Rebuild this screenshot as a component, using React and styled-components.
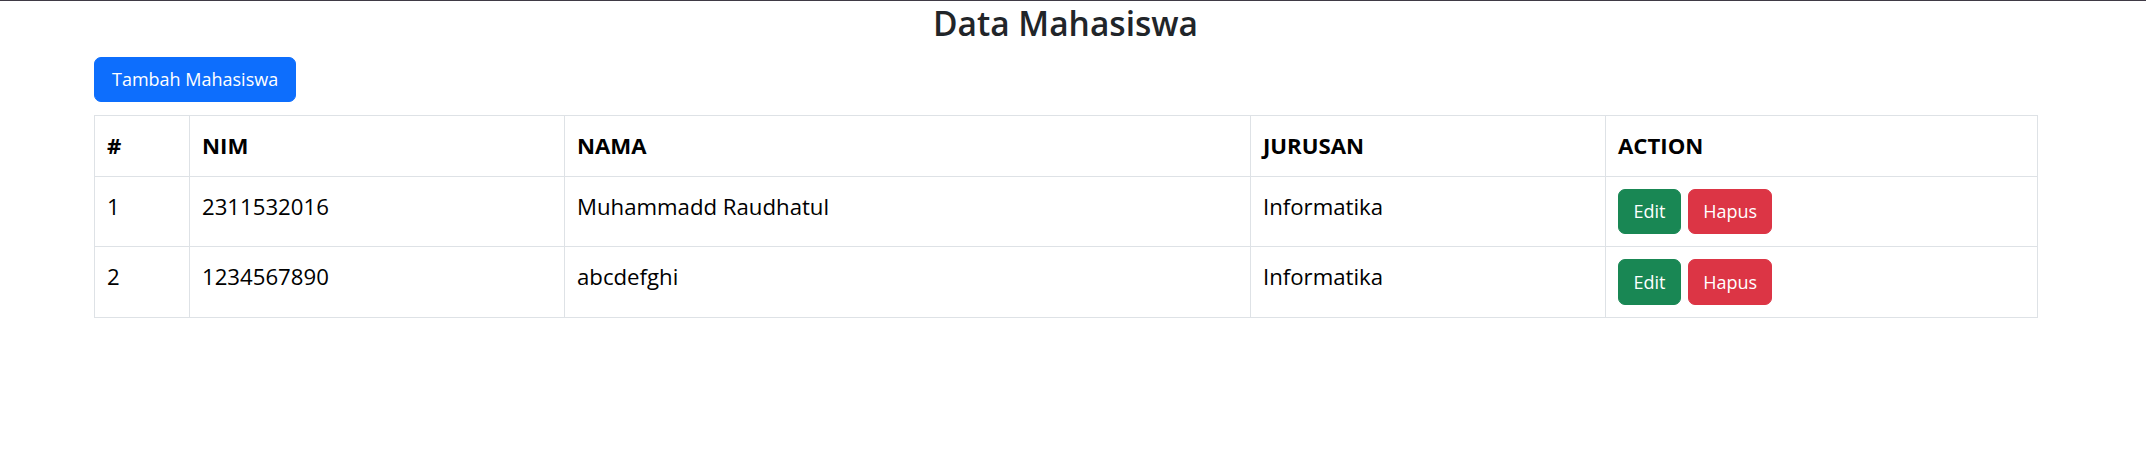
import styled, { createGlobalStyle } from "styled-components";

const GlobalStyle = createGlobalStyle`
  body {
    margin: 0;
    border-top: 1px solid #3f3a45;
    background: #fff;
    font-family: "Open Sans", "Segoe UI", "Noto Sans", sans-serif;
    color: #212529;
  }
`;

const Page = styled.div`
  padding: 0 109px 0 94px;
`;

const Title = styled.h2`
  margin: 0 0 12px;
  text-align: center;
  font-size: 33.5px;
  line-height: 44px;
  font-weight: 600;
  color: #212529;
`;

const COLORS = {
  primary: "#0d6efd",
  success: "#198754",
  danger: "#dc3545",
};

const Button = styled.button`
  display: inline-block;
  font-family: inherit;
  font-size: 18px;
  line-height: 28.8px;
  padding: 7.2px ${(p) => p.$px || 14.4}px;
  border: 1px solid ${(p) => COLORS[p.$variant]};
  border-radius: 7px;
  background: ${(p) => COLORS[p.$variant]};
  color: #fff;
  cursor: pointer;
`;

const Table = styled.table`
  width: 100%;
  margin-top: 13px;
  table-layout: fixed;
  border-collapse: collapse;
  font-size: 22.2px;
  line-height: 36px;
  color: #000;
`;

const Th = styled.th`
  box-sizing: border-box;
  width: ${(p) => p.$w}px;
  padding: 12px;
  border: 1px solid #dee2e6;
  text-align: left;
  vertical-align: top;
  font-weight: 700;
`;

const Td = styled.td`
  padding: 12px;
  border: 1px solid #dee2e6;
  vertical-align: top;
`;

const Actions = styled.div`
  display: flex;
  gap: 7px;
`;

const columns = [
  { label: "#", w: 95 },
  { label: "NIM", w: 375 },
  { label: "NAMA", w: 686 },
  { label: "JURUSAN", w: 355 },
  { label: "ACTION", w: 432 },
];

const mahasiswa = [
  { id: 1, nim: "2311532016", nama: "Muhammadd Raudhatul", jurusan: "Informatika" },
  { id: 2, nim: "1234567890", nama: "abcdefghi", jurusan: "Informatika" },
];

export default function App() {
  return (
    <>
      <GlobalStyle />
      <Page>
        <Title>Data Mahasiswa</Title>
        <Button $variant="primary" $px={17}>
          Tambah Mahasiswa
        </Button>
        <Table>
          <thead>
            <tr>
              {columns.map((c) => (
                <Th key={c.label} $w={c.w}>
                  {c.label}
                </Th>
              ))}
            </tr>
          </thead>
          <tbody>
            {mahasiswa.map((m, i) => (
              <tr key={m.id}>
                <Td>{i + 1}</Td>
                <Td>{m.nim}</Td>
                <Td>{m.nama}</Td>
                <Td>{m.jurusan}</Td>
                <Td>
                  <Actions>
                    <Button $variant="success">Edit</Button>
                    <Button $variant="danger">Hapus</Button>
                  </Actions>
                </Td>
              </tr>
            ))}
          </tbody>
        </Table>
      </Page>
    </>
  );
}
